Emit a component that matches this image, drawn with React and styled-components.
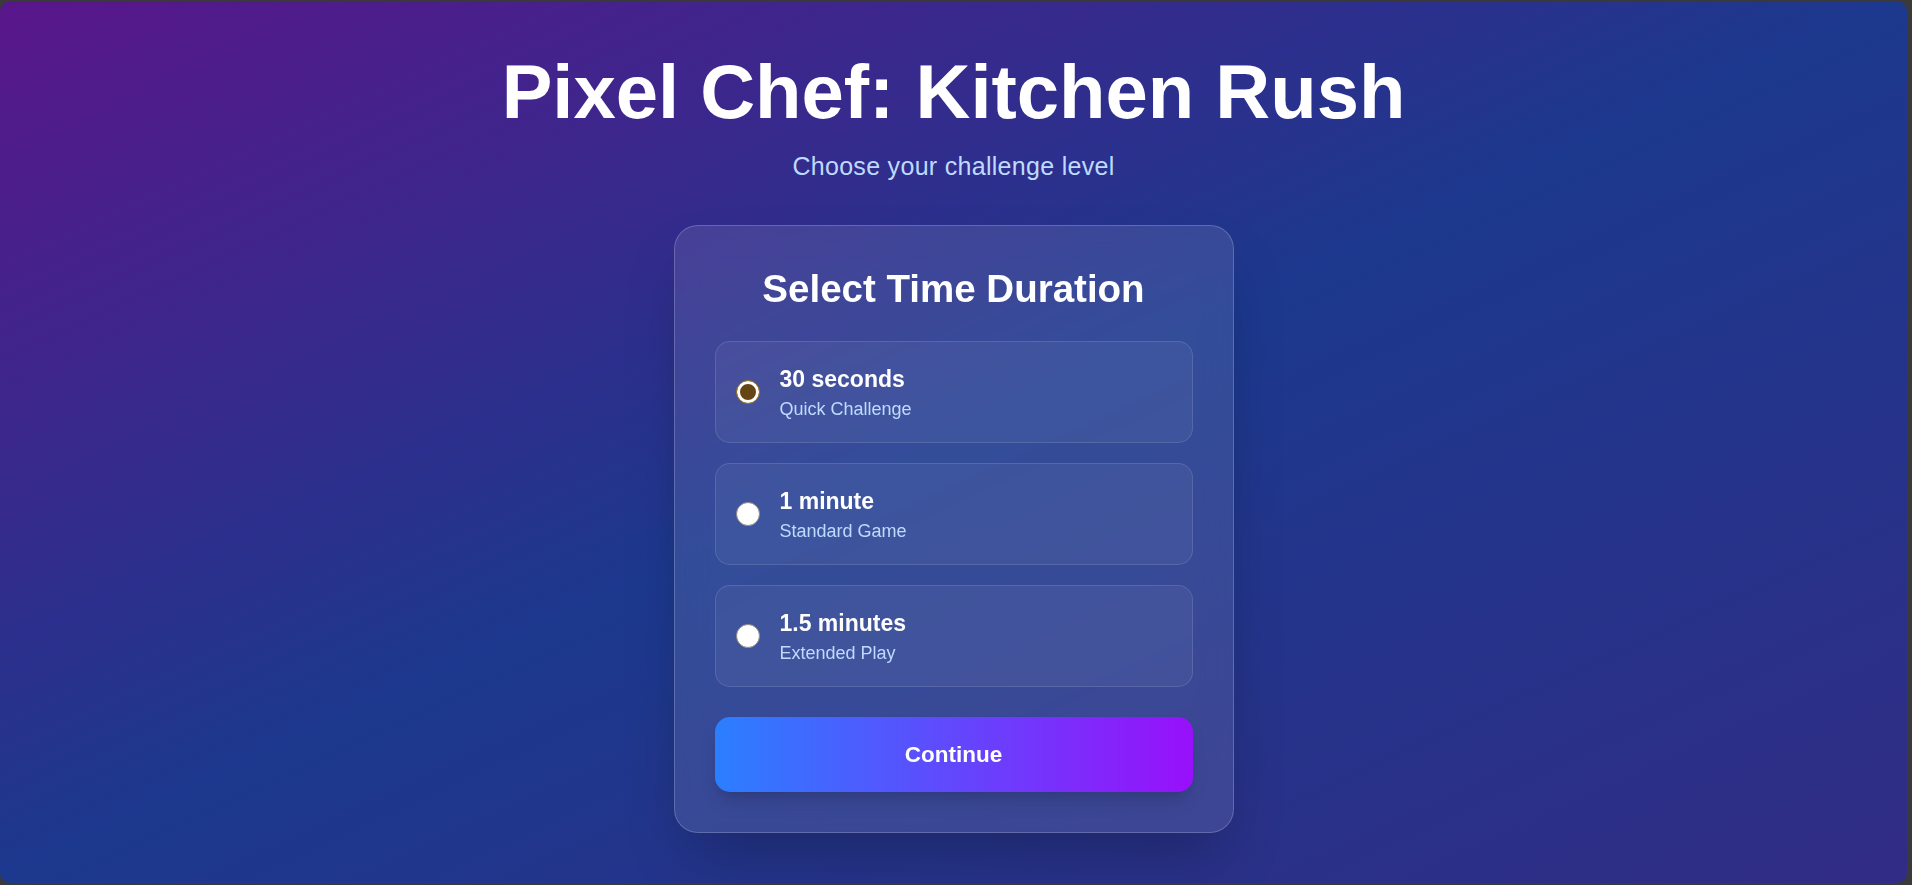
import styled, { createGlobalStyle } from "styled-components";
import { useState } from "react";

const durations = [
  { id: "30s", label: "30 seconds", note: "Quick Challenge" },
  { id: "60s", label: "1 minute", note: "Standard Game" },
  { id: "90s", label: "1.5 minutes", note: "Extended Play" },
];

const App = () => {
  const [selected, setSelected] = useState("30s");

  return (
    <>
      <GlobalStyle />
      <Page>
        <Title>Pixel Chef: Kitchen Rush</Title>
        <Subtitle>Choose your challenge level</Subtitle>
        <Card>
          <CardHeading>Select Time Duration</CardHeading>
          <OptionList>
            {durations.map((d) => (
              <Option key={d.id}>
                <Radio
                  type="radio"
                  name="duration"
                  value={d.id}
                  checked={selected === d.id}
                  onChange={() => setSelected(d.id)}
                />
                <OptionText>
                  <OptionTitle>{d.label}</OptionTitle>
                  <OptionNote>{d.note}</OptionNote>
                </OptionText>
              </Option>
            ))}
          </OptionList>
          <ContinueButton type="button">Continue</ContinueButton>
        </Card>
      </Page>
    </>
  );
};

const GlobalStyle = createGlobalStyle`
  html, body {
    margin: 0;
    padding: 0;
    background: #3a3a3a;
  }

  body {
    font-family: "Liberation Sans", Arial, sans-serif;
  }

  #root {
    padding-top: 1px;
  }
`;

const Page = styled.div`
  box-sizing: border-box;
  height: 882px;
  margin-right: 5px;
  border-radius: 10px;
  overflow: hidden;
  background: linear-gradient(to bottom right, #59168b, #1c398e, #312c85);
  display: flex;
  flex-direction: column;
  align-items: center;
  padding-top: 53px;
`;

const Title = styled.h1`
  margin: 0 0 20px;
  font-size: 76px;
  line-height: 75px;
  font-weight: 700;
  color: #fff;
  text-align: center;
`;

const Subtitle = styled.p`
  margin: 0 0 41px;
  font-size: 25px;
  line-height: 35px;
  letter-spacing: 0.3px;
  color: #bedbff;
`;

const Card = styled.div`
  box-sizing: border-box;
  width: 560px;
  padding: 40px;
  border: 1px solid rgba(255, 255, 255, 0.2);
  border-radius: 24px;
  background: rgba(255, 255, 255, 0.1);
  backdrop-filter: blur(16px);
  box-shadow: 0 31px 62px -15px rgba(0, 0, 0, 0.25);
  display: flex;
  flex-direction: column;
`;

const CardHeading = styled.h2`
  margin: 0 0 30px;
  font-size: 38.5px;
  line-height: 45px;
  font-weight: 700;
  color: #fff;
  text-align: center;
`;

const OptionList = styled.div`
  display: flex;
  flex-direction: column;
  gap: 20px;
`;

const Option = styled.label`
  display: flex;
  align-items: center;
  gap: 20px;
  padding: 20px;
  border: 1px solid rgba(255, 255, 255, 0.12);
  border-radius: 15px;
  background: rgba(255, 255, 255, 0.05);
  cursor: pointer;
`;

const Radio = styled.input`
  appearance: none;
  box-sizing: border-box;
  flex: none;
  width: 24px;
  height: 24px;
  margin: 0;
  border-radius: 50%;
  border: 1px solid #8f8a80;
  background: #fff;
  cursor: pointer;

  &:checked {
    border: 1px solid #a07a28;
    background: #654513;
    box-shadow: inset 0 0 0 3px #fff;
  }
`;

const OptionText = styled.div`
  display: flex;
  flex-direction: column;
`;

const OptionTitle = styled.span`
  font-size: 23px;
  line-height: 35px;
  font-weight: 700;
  color: #fff;
`;

const OptionNote = styled.span`
  font-size: 18px;
  line-height: 25px;
  color: #bedbff;
`;

const ContinueButton = styled.button`
  margin-top: 30px;
  height: 75px;
  border: none;
  border-radius: 15px;
  background: linear-gradient(to right, #2b7fff, #9810fa);
  color: #fff;
  font-family: inherit;
  font-size: 22.5px;
  font-weight: 700;
  box-shadow: 0 12px 19px -4px rgba(0, 0, 0, 0.15),
    0 5px 8px -5px rgba(0, 0, 0, 0.1);
  cursor: pointer;
`;

export default App;
